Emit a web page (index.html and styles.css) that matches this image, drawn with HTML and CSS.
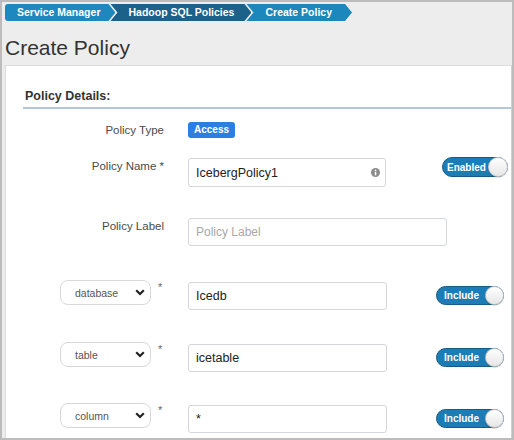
FILE: index.html
```html
<!DOCTYPE html>
<html>
<head>
<meta charset="utf-8">
<link rel="stylesheet" href="styles.css">
</head>
<body>
<div class="frame">
  <nav class="crumbs">
    <span class="crumb c1">Service Manager</span>
    <span class="crumb c2">Hadoop SQL Policies</span>
    <span class="crumb c3">Create Policy</span>
  </nav>
  <h1 class="title">Create Policy</h1>
  <div class="panel">
    <div class="section-head">Policy Details:</div>

    <div class="row row-type">
      <div class="lbl">Policy Type</div>
      <div class="ctl"><span class="badge">Access</span></div>
    </div>

    <div class="row row-name">
      <div class="lbl lbl-pad">Policy Name *</div>
      <div class="ctl">
        <div class="input input-name">
          <span class="val">IcebergPolicy1</span>
          <svg class="info" width="9" height="9" viewBox="0 0 9 9"><circle cx="4.5" cy="4.5" r="4.5" fill="#8c8c8c"/><rect x="3.8" y="3.7" width="1.5" height="3.6" fill="#fff"/><circle cx="4.55" cy="2.3" r="0.85" fill="#fff"/></svg>
        </div>
        <span class="toggle toggle-enabled"><span class="tg-text">Enabled</span><span class="knob"></span></span>
      </div>
    </div>

    <div class="row row-label">
      <div class="lbl">Policy Label</div>
      <div class="ctl">
        <div class="input input-label"><span class="ph">Policy Label</span></div>
      </div>
    </div>

    <div class="row res res-1">
      <div class="lbl res-lbl">
        <div class="select"><span>database</span><svg width="10" height="7" viewBox="0 0 10 7"><polyline points="1.2,1.2 5,5 8.8,1.2" fill="none" stroke="#222" stroke-width="2.2"/></svg></div>
        <span class="star">*</span>
      </div>
      <div class="ctl">
        <div class="input input-res"><span class="val">Icedb</span></div>
        <span class="toggle toggle-inc"><span class="tg-text">Include</span><span class="knob"></span></span>
      </div>
    </div>

    <div class="row res res-2">
      <div class="lbl res-lbl">
        <div class="select"><span>table</span><svg width="10" height="7" viewBox="0 0 10 7"><polyline points="1.2,1.2 5,5 8.8,1.2" fill="none" stroke="#222" stroke-width="2.2"/></svg></div>
        <span class="star">*</span>
      </div>
      <div class="ctl">
        <div class="input input-res"><span class="val">icetable</span></div>
        <span class="toggle toggle-inc"><span class="tg-text">Include</span><span class="knob"></span></span>
      </div>
    </div>

    <div class="row res res-3">
      <div class="lbl res-lbl">
        <div class="select"><span>column</span><svg width="10" height="7" viewBox="0 0 10 7"><polyline points="1.2,1.2 5,5 8.8,1.2" fill="none" stroke="#222" stroke-width="2.2"/></svg></div>
        <span class="star">*</span>
      </div>
      <div class="ctl">
        <div class="input input-res"><span class="val">*</span></div>
        <span class="toggle toggle-inc"><span class="tg-text">Include</span><span class="knob"></span></span>
      </div>
    </div>
  </div>
</div>
</body>
</html>
```

FILE: styles.css
```css
html, body {
  margin: 0;
  padding: 0;
  background: #ffffff;
}
body {
  font-family: "Liberation Sans", Arial, Helvetica, sans-serif;
  color: #333;
}
.frame {
  width: 514px;
  height: 440px;
  box-sizing: border-box;
  border: 2px solid #bcbcbc;
  background: #ededed;
  padding: 2px 0 0 3px;
  overflow: hidden;
}

/* breadcrumbs */
.crumbs {
  display: flex;
  height: 17px;
}
.crumb {
  height: 17px;
  line-height: 17px;
  font-size: 10.5px;
  font-weight: bold;
  color: #ffffff;
  white-space: nowrap;
}
.c1 {
  background: #1c88bd;
  padding: 0 15px 0 12px;
  border-radius: 3px 0 0 3px;
  clip-path: polygon(0 0, calc(100% - 7px) 0, 100% 50%, calc(100% - 7px) 100%, 0 100%);
}
.c2 {
  background: #1b6189;
  margin-left: -5px;
  padding: 0 17px 0 18px;
  clip-path: polygon(0 0, calc(100% - 7px) 0, 100% 50%, calc(100% - 7px) 100%, 0 100%, 7px 50%);
}
.c3 {
  background: #1c87bb;
  margin-left: -5px;
  padding: 0 20px 0 19px;
  clip-path: polygon(0 0, calc(100% - 7px) 0, 100% 50%, calc(100% - 7px) 100%, 0 100%, 7px 50%);
}

.title {
  margin: 15px 0 5px 0;
  font-size: 21px;
  line-height: 24px;
  font-weight: normal;
  color: #333;
}

.panel {
  background: #ffffff;
  border: 1px solid #dcdcdc;
  border-right-color: #d0d0d0;
  height: 420px;
}
.section-head {
  margin: 23px 0 0 17px;
  padding: 0 0 3px 2px;
  font-size: 12.5px;
  line-height: 15px;
  font-weight: bold;
  color: #333;
  border-bottom: 2px solid #b3c6db;
}

.row {
  display: flex;
  align-items: flex-start;
}
.lbl {
  width: 158px;
  flex: none;
  text-align: right;
  font-size: 11.5px;
  line-height: 16px;
  color: #4a4a4a;
}
.lbl-pad {
  padding-top: 1px;
}
.ctl {
  margin-left: 24px;
  display: flex;
  align-items: flex-start;
}

.row-type { margin-top: 13px; }
.row-name { margin-top: 19px; }
.row-label { margin-top: 31px; }
.res-1 { margin-top: 34px; }
.res-2 { margin-top: 32px; }
.res-3 { margin-top: 31px; }

.badge {
  display: inline-block;
  height: 16px;
  line-height: 16px;
  padding: 0 6px;
  border-radius: 3px;
  background: #2b7fe3;
  color: #fff;
  font-size: 10px;
  font-weight: bold;
}

.input {
  box-sizing: border-box;
  border: 1px solid #d3d6da;
  border-radius: 3px;
  background: #fff;
  display: flex;
  align-items: center;
  justify-content: space-between;
  padding: 0 5px 0 7px;
  font-size: 12.5px;
  color: #222;
}
.input-name {
  margin-top: 1px;
  width: 198px;
  height: 29px;
}
.input-label {
  width: 259px;
  height: 28px;
}
.input-res {
  margin-top: 2px;
  width: 199px;
  height: 28px;
}
.ph {
  color: #a8a8a8;
  font-size: 12px;
}
.info {
  display: block;
}

.res-lbl {
  display: flex;
  justify-content: flex-end;
  align-items: flex-start;
}
.select {
  box-sizing: border-box;
  width: 91px;
  height: 25px;
  border: 1px solid #d8d8d8;
  border-radius: 8px;
  display: flex;
  align-items: center;
  justify-content: space-between;
  padding: 0 5px 0 14px;
  font-size: 10.5px;
  color: #555;
  background: #fff;
}
.select svg {
  display: block;
}
.star {
  width: 6px;
  margin-left: 7px;
  margin-top: 2px;
  font-size: 11px;
  line-height: 11px;
  color: #666;
  text-align: left;
}

.toggle {
  position: relative;
  box-sizing: border-box;
  display: inline-flex;
  align-items: center;
  border: 1px solid #165b82;
  border-radius: 10px;
  background: #1c7db6;
  color: #fff;
  font-size: 10px;
  font-weight: bold;
}
.toggle-enabled {
  margin-left: 56px;
  width: 66px;
  height: 20px;
  padding-left: 4px;
}
.toggle-inc {
  margin-left: 49px;
  margin-top: 6px;
  width: 68px;
  height: 19px;
  padding-left: 7px;
}
.knob {
  position: absolute;
  right: -1px;
  top: -1px;
  box-sizing: border-box;
  width: 20px;
  height: 20px;
  border-radius: 50%;
  border: 1px solid #c6c6c6;
  background: linear-gradient(#ffffff, #e6e6e6);
  box-shadow: 0 1px 1px rgba(0,0,0,0.15);
}
.toggle-inc .knob {
  width: 19px;
  height: 19px;
}
```
